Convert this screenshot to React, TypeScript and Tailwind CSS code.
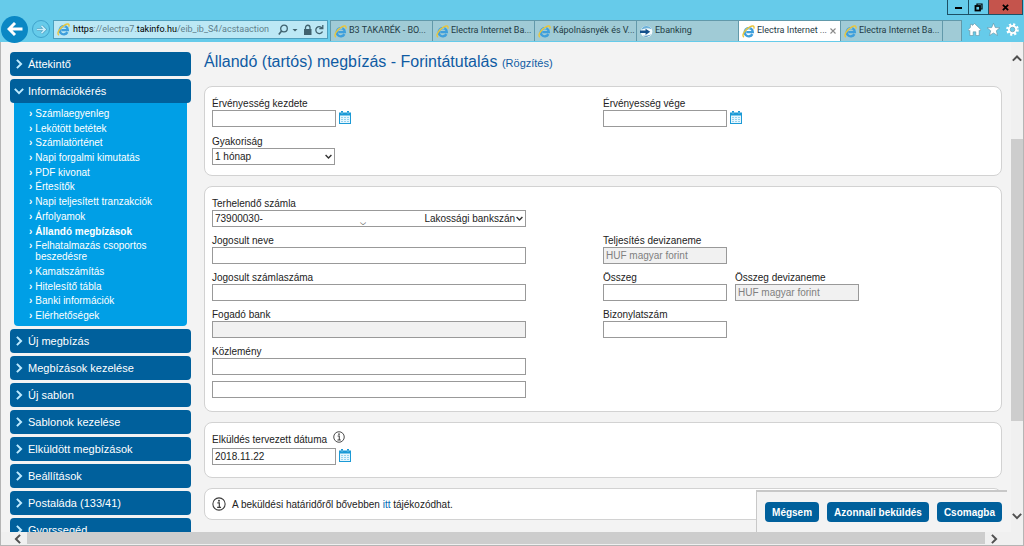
import React, { useState } from "react";

const mainMenuAfter = [
  "Új megbízás",
  "Megbízások kezelése",
  "Új sablon",
  "Sablonok kezelése",
  "Elküldött megbízások",
  "Beállítások",
  "Postaláda (133/41)",
  "Gyorssegéd",
];

const subMenu = [
  "Számlaegyenleg",
  "Lekötött betétek",
  "Számlatörténet",
  "Napi forgalmi kimutatás",
  "PDF kivonat",
  "Értesítők",
  "Napi teljesített tranzakciók",
  "Árfolyamok",
  "Állandó megbízások",
  "Felhatalmazás csoportos beszedésre",
  "Kamatszámítás",
  "Hitelesítő tábla",
  "Banki információk",
  "Elérhetőségek",
];

const tabs = [
  { title: "B3 TAKARÉK - BO...", icon: "ie" },
  { title: "Electra Internet Ba...", icon: "ie" },
  { title: "Kápolnásnyék és V...", icon: "ie" },
  { title: "Ebanking", icon: "bank" },
  { title: "Electra Internet ...", icon: "ie", active: true },
  { title: "Electra Internet Ba...", icon: "ie" },
];

function IeIcon() {
  return (
    <svg viewBox="0 0 14 14" className="size-[13px] shrink-0" fill="none" aria-hidden="true">
      <path d="M11.200 9.800A4.400 4.400 0 1 1 11.700 7.700H4.600" stroke="#3f9fdc" strokeWidth="2.500" />
      <path d="M3.400 6.400A4 4 0 0 1 9 4" stroke="#8fd0f5" strokeWidth="0.900" />
      <path d="M1.600 12.600C-.4 10.400 4 4.400 8 2.200C11 .6 13.400 .5 12.900 3.300" stroke="#e9c63c" strokeWidth="1.500" strokeLinecap="round" />
    </svg>
  );
}

function BankIcon() {
  return (
    <svg viewBox="0 0 14 14" className="size-[13px] shrink-0" aria-hidden="true">
      <circle cx="7" cy="7" r="6.300" fill="#f4fbfd" />
      <path d="M1.300 5.200A6 6 0 0 1 12.500 4.600C9 3 5 3.200 1.300 5.200Z" fill="#6fb2da" />
      <path d="M0 6H6V4L11 7.400L6 10.800V8.600H0Z" fill="#15508c" />
      <path d="M3 11.600C6 13.200 9.500 13 12.300 10C10 11.400 6.500 11.800 3 11.600Z" fill="#2f7fb8" />
    </svg>
  );
}

function Chevron({ dir, className }: { dir: "up" | "down" | "left" | "right"; className: string }) {
  const d = {
    up: "M1 8L6 3L11 8",
    down: "M1 3.500L6 8.500L11 3.500",
    left: "M8.500 1L3.500 6L8.500 11",
    right: "M3.500 1L8.500 6L3.500 11",
  }[dir];
  return (
    <svg viewBox="0 0 12 12" className={className} fill="none" stroke="currentColor" strokeWidth="2.400" aria-hidden="true">
      <path d={d} />
    </svg>
  );
}

function CalendarIcon() {
  return (
    <svg viewBox="0 0 12 13" className="h-[13px] w-3" aria-hidden="true">
      <path d="M2 0H4V1.500H8V0H10V1.500H12V13H0V1.500H2Z" fill="#1c9ad6" />
      <rect x="1" y="4.500" width="10" height="7.500" fill="#e6f6fd" />
      <g fill="#45aede">
        <rect x="2.500" y="6" width="1" height="1" />
        <rect x="5.500" y="6" width="1" height="1" />
        <rect x="8.500" y="6" width="1" height="1" />
        <rect x="2.500" y="8" width="1" height="1" />
        <rect x="5.500" y="8" width="1" height="1" />
        <rect x="8.500" y="8" width="1" height="1" />
        <rect x="2.500" y="10" width="1" height="1" />
        <rect x="5.500" y="10" width="1" height="1" />
        <rect x="8.500" y="10" width="1" height="1" />
      </g>
      <path d="M2.500 2H3.500M8.500 2H9.500" stroke="#fff" strokeWidth="0.800" />
    </svg>
  );
}

function CalendarButton() {
  return (
    <button type="button" aria-label="Naptár" className="pt-px">
      <CalendarIcon />
    </button>
  );
}

function InfoIcon({ className }: { className: string }) {
  return (
    <svg viewBox="0 0 13 13" className={className} fill="none" stroke="#3c3c3c" aria-hidden="true">
      <circle cx="6.500" cy="6.500" r="5.700" strokeWidth="1" />
      <path d="M5 5.500H6.800V9.500M4.800 9.700H8.400" strokeWidth="1.100" />
      <circle cx="6.500" cy="3.400" r="0.900" fill="#3c3c3c" stroke="none" />
    </svg>
  );
}

function TextBox({
  id,
  value = "",
  disabled = false,
  wide = false,
  label,
}: {
  id: string;
  value?: string;
  disabled?: boolean;
  wide?: boolean;
  label?: string;
}) {
  return (
    <input
      id={id}
      type="text"
      defaultValue={value}
      disabled={disabled}
      aria-label={label}
      className={
        (wide ? "w-[314px]" : "w-[124px]") +
        " h-[17px] border border-[#999] px-[2px] leading-3 " +
        (disabled ? "bg-[#f1f1f1] text-[#808080]" : "bg-white text-[#222]")
      }
    />
  );
}

function Field({
  id,
  label,
  value = "",
  disabled = false,
  calendar = false,
  wide = false,
}: {
  id: string;
  label: string;
  value?: string;
  disabled?: boolean;
  calendar?: boolean;
  wide?: boolean;
}) {
  return (
    <div>
      <label htmlFor={id} className="block leading-[13px]">
        {label}
      </label>
      <div className="flex items-start gap-[3px]">
        <TextBox id={id} value={value} disabled={disabled} wide={wide} />
        {calendar && <CalendarButton />}
      </div>
    </div>
  );
}

function Picker({ id, label, option, wide = false }: { id: string; label: string; option: string; wide?: boolean }) {
  return (
    <div>
      <label htmlFor={id} className="block leading-[13px]">
        {label}
      </label>
      <div className={(wide ? "w-[314px]" : "w-[123px]") + " relative"}>
        <select
          id={id}
          className="block h-[17px] w-full appearance-none border border-[#999] bg-white px-[2px] leading-[14px] text-[#222]"
        >
          <option>{option}</option>
        </select>
        <Chevron dir="down" className="pointer-events-none absolute top-[5px] right-[3px] size-[7px] text-[#333]" />
      </div>
    </div>
  );
}

function Card({ className, children }: { className: string; children: React.ReactNode }) {
  return <section className={"rounded-lg border border-[#d2d2d2] bg-white px-[7px] " + className}>{children}</section>;
}

function MenuButton({ label, open = false, onClick }: { label: string; open?: boolean; onClick?: () => void }) {
  return (
    <button
      type="button"
      aria-expanded={open}
      onClick={onClick}
      className="flex h-6 w-full shrink-0 items-center gap-1 rounded-[4px] bg-[#00609c] pl-1 text-left text-[11px] text-white"
    >
      <Chevron dir={open ? "down" : "right"} className="size-[10px] text-[#bdeaff]" />
      {label}
    </button>
  );
}

function BrowserBar() {
  return (
    <header className="shrink-0 bg-[#66cbea] font-[Roboto,'Noto_Sans',sans-serif] text-[9px]">
      <div className="flex h-5 items-start justify-end pr-px">
        <button type="button" aria-label="Kis méret" className="flex h-[15px] w-[22px] items-end justify-center border border-t-0 border-[#1d5065] pb-[5px]">
          <span className="h-[2px] w-[7px] bg-black" />
        </button>
        <button type="button" aria-label="Előző méret" className="flex h-[15px] w-5 items-center justify-center border border-t-0 border-l-0 border-[#1d5065]">
          <svg viewBox="0 0 9 9" className="size-[9px]" fill="none" stroke="#000" aria-hidden="true">
            <path d="M3 2.500V1H8V6H6.500" strokeWidth="1.200" />
            <rect x="1.500" y="3" width="4.500" height="4.500" strokeWidth="1.800" />
          </svg>
        </button>
        <button type="button" aria-label="Bezárás" className="flex h-[15px] w-[34px] items-center justify-center border border-t-0 border-l-0 border-[#1d5065] bg-[#c5544c]">
          <svg viewBox="0 0 8 8" className="size-[7px]" stroke="#000" strokeWidth="2" aria-hidden="true">
            <path d="M1 1L7 7M7 1L1 7" />
          </svg>
        </button>
      </div>
      <div className="flex h-[22px] items-start">
        <div className="flex h-[18px] w-[53px] shrink-0 items-center gap-1 pl-px">
          <button type="button" aria-label="Vissza" className="flex size-[27px] shrink-0 items-center justify-center rounded-full bg-[#0a87c4] text-white">
            <svg viewBox="0 0 16 14" className="h-[14px] w-4" fill="none" stroke="currentColor" strokeWidth="2.900" aria-hidden="true">
              <path d="M15.500 7H2.500M8 1L2 7L8 13" />
            </svg>
          </button>
          <button type="button" aria-label="Előre" className="flex size-[18px] shrink-0 items-center justify-center rounded-full border border-[#3fa3cc]">
            <svg viewBox="0 0 12 12" className="size-[11px]" fill="none" stroke="#4c9fc0" strokeWidth="3.200" aria-hidden="true">
              <path d="M1 6H10M6 2L10 6L6 10" />
              <path d="M1 6H10M6 2L10 6L6 10" stroke="#c9eefa" strokeWidth="1.700" />
            </svg>
          </button>
        </div>
        <div className="flex h-[19px] w-[275px] shrink-0 items-center border border-[#4d9fbd] bg-[#bce8f5] pr-[3px] pl-[3px]">
          <IeIcon />
          <input
            type="text"
            aria-label="Cím"
            className="sr-only"
            defaultValue="https://electra7.takinfo.hu/eib_ib_S4/acstaaction"
          />
          <span className="flex-1 pl-[3px] whitespace-nowrap text-[#5f818d]">
            <span className="text-black">https</span>://electra7.<span className="text-black">takinfo.hu</span>/eib_ib_S4/acstaaction
          </span>
          <svg viewBox="0 0 46 12" className="h-3 w-[46px] shrink-0" fill="none" stroke="#40626f" aria-hidden="true">
            <circle cx="6" cy="4.500" r="3.300" strokeWidth="1.300" />
            <path d="M3.600 7L.800 10.500" strokeWidth="1.600" />
            <path d="M14.500 5H19.500L17 7.500Z" fill="#40626f" stroke="none" />
            <rect x="26" y="5" width="7.500" height="6" fill="#40626f" stroke="none" />
            <path d="M27.500 5.500V3.500A2.200 2.200 0 0 1 32 3.500V5.500" strokeWidth="1.300" />
            <path d="M44 3.800A3.500 3.500 0 1 0 44.500 7.500M44.800 1V4.500H41.300" strokeWidth="1.300" />
          </svg>
        </div>
        <nav className="ml-[2px] flex min-w-0 flex-1" aria-label="Lapok">
          {tabs.map((tab, i) => (
            <div
              key={i}
              className={
                "flex h-[21px] w-[102px] min-w-0 shrink items-center gap-[2px] border-t border-l border-[#6299aa] pl-[3px] text-[#1f3b45] " +
                (tab.active ? "bg-white" : "bg-[#a0cbd6]")
              }
            >
              {tab.icon === "ie" ? <IeIcon /> : <BankIcon />}
              <a href="#" className="whitespace-nowrap">
                {tab.title}
              </a>
              {tab.active && (
                <button type="button" aria-label="Lap bezárása" className="mr-1 ml-auto">
                  <svg viewBox="0 0 6 6" className="size-[6px]" stroke="#8a8a8a" strokeWidth="1.100" aria-hidden="true">
                    <path d="M.500 .500L5.500 5.500M5.500 .500L.500 5.500" />
                  </svg>
                </button>
              )}
            </div>
          ))}
          <button type="button" aria-label="Új lap" className="h-[21px] w-5 border border-b-0 border-[#6299aa] bg-[#a0cbd6]" />
        </nav>
        <div className="flex h-[18px] shrink-0 items-center gap-[6px] pr-[5px] text-white">
          <button type="button" aria-label="Kezdőlap">
            <svg viewBox="0 0 14 14" className="size-[13px]" fill="#fff" stroke="#5b8a9a" strokeWidth="0.600" aria-hidden="true">
              <path d="M7 .500L14 7.300L12.800 8.600L12 7.900V13.500H8.400V9.500H5.600V13.500H2V7.900L1.200 8.600L0 7.300L2.600 4.800V1.500H4.800V2.700Z" />
            </svg>
          </button>
          <button type="button" aria-label="Kedvencek">
            <svg viewBox="0 0 14 14" className="size-[13px]" fill="#fff" stroke="#5b8a9a" strokeWidth="0.600" aria-hidden="true">
              <path d="M7 .300L8.900 4.900L13.800 5.200L10 8.400L11.300 13.400L7 10.700L2.700 13.400L4 8.400L.200 5.200L5.100 4.900Z" />
            </svg>
          </button>
          <button type="button" aria-label="Eszközök">
            <svg viewBox="0 0 14 14" className="size-[13px]" fill="none" aria-hidden="true">
              <circle cx="7" cy="7" r="5.400" stroke="#fff" strokeWidth="2.800" strokeDasharray="2.200 2.040" />
              <circle cx="7" cy="7" r="3.700" stroke="#fff" strokeWidth="2.400" />
              <circle cx="7" cy="7" r="2.500" stroke="#5b8a9a" strokeWidth="0.600" />
            </svg>
          </button>
        </div>
      </div>
    </header>
  );
}

const nb = "\u00a0";
const accountOption = "73900030-" + nb.repeat(35) + "\u203f" + nb.repeat(21) + "Lakossági bankszán";

export default function App() {
  const [open, setOpen] = useState(true);
  return (
    <div className="flex h-screen flex-col overflow-hidden bg-[#f3f3f3] font-['Liberation_Sans',Arial,sans-serif] text-[10px] text-[#222]">
      <BrowserBar />
      <div className="flex min-h-0 flex-1 flex-col border-x border-b border-[#b5b5b5]">
        <div className="flex min-h-0 flex-1">
          <div className="relative flex min-w-0 flex-1 items-start gap-[13px] self-stretch overflow-hidden pt-[10px] pr-[9px] pl-[9px]">
            <nav className="flex w-[181px] shrink-0 flex-col gap-[3px]" aria-label="Főmenü">
              <MenuButton label="Áttekintő" />
              <div>
                <MenuButton label="Információkérés" open={open} onClick={() => setOpen(!open)} />
                {open && (
                  <ul className="mx-1 flex min-h-[223px] flex-col justify-between rounded-b-[4px] bg-[#009fe6] pt-[5px] pr-6 pb-[5px] pl-[15px] leading-[11px] text-white">
                    {subMenu.map((item) => (
                      <li key={item} className="flex gap-[3px]">
                        <span aria-hidden="true" className="font-bold">
                          ›
                        </span>
                        <a href="#" className={item === "Állandó megbízások" ? "font-bold" : ""}>
                          {item}
                        </a>
                      </li>
                    ))}
                  </ul>
                )}
              </div>
              {mainMenuAfter.map((item) => (
                <MenuButton key={item} label={item} />
              ))}
            </nav>

            <main className="flex min-w-0 flex-1 flex-col gap-[10px]">
              <h1 className="h-6 text-[16px] leading-5 text-[#0f5ba3]">
                Állandó (tartós) megbízás - Forintátutalás <small className="text-[11px]">(Rögzítés)</small>
              </h1>

              <Card className="grid grid-cols-[391px_1fr] gap-y-2 pt-[10px] pb-[10px]">
                <Field id="start" label="Érvényesség kezdete" calendar />
                <Field id="end" label="Érvényesség vége" calendar />
                <Picker id="frequency" label="Gyakoriság" option="1 hónap" />
              </Card>

              <Card className="grid grid-cols-[391px_1fr] gap-y-[7px] pt-[10px] pb-[13px]">
                <div className="col-span-2">
                  <Picker id="account" label="Terhelendő számla" option={accountOption} wide />
                </div>
                <Field id="name" label="Jogosult neve" wide />
                <Field id="currency" label="Teljesítés devizaneme" value="HUF magyar forint" disabled />
                <Field id="beneficiary" label="Jogosult számlaszáma" wide />
                <div className="flex gap-2">
                  <Field id="amount" label="Összeg" />
                  <Field id="amountCurrency" label="Összeg devizaneme" value="HUF magyar forint" disabled />
                </div>
                <Field id="bank" label="Fogadó bank" disabled wide />
                <Field id="document" label="Bizonylatszám" />
                <div className="flex flex-col gap-[6px]">
                  <Field id="note1" label="Közlemény" wide />
                  <TextBox id="note2" label="Közlemény második sora" wide />
                </div>
              </Card>

              <Card className="pt-2 pb-3">
                <div className="flex items-start gap-[6px]">
                  <label htmlFor="sendDate" className="pt-[2px] pb-[2px] leading-[13px]">
                    Elküldés tervezett dátuma
                  </label>
                  <InfoIcon className="size-3" />
                </div>
                <div className="flex items-start gap-[3px]">
                  <TextBox id="sendDate" value="2018.11.22" />
                  <CalendarButton />
                </div>
              </Card>

              <Card className="flex h-8 items-center gap-[6px]">
                <InfoIcon className="size-[14px]" />
                <p>
                  A beküldési határidőről bővebben{" "}
                  <a href="#" className="text-[#0069b4]">
                    itt
                  </a>{" "}
                  tájékozódhat.
                </p>
              </Card>
            </main>

            <div className="absolute right-1 bottom-0 flex h-[42px] items-start gap-2 border-t-2 border-l border-[#c8c8c8] bg-[#f3f3f3] pt-[10px] pr-[5px] pl-2 font-bold text-white">
              <button type="button" className="h-5 rounded-[4px] bg-[#00609c] px-[7px]">
                Mégsem
              </button>
              <button type="button" className="h-5 rounded-[4px] bg-[#00609c] px-[7px]">
                Azonnali beküldés
              </button>
              <button type="button" className="h-5 rounded-[4px] bg-[#00609c] px-[7px]">
                Csomagba
              </button>
            </div>
          </div>

          <div className="flex w-3 shrink-0 flex-col items-center bg-[#f0f0f0] text-[#505050]" aria-hidden="true">
            <Chevron dir="up" className="mt-3 size-[10px]" />
            <div className="mt-[75px] w-full flex-1 bg-[#cdcdcd]" />
            <Chevron dir="down" className="mt-[90px] mb-[11px] size-[10px]" />
          </div>
        </div>
        <div className="flex h-[13px] shrink-0 items-center bg-[#f0f0f0] pr-6 pl-3 text-[#505050]" aria-hidden="true">
          <Chevron dir="left" className="size-[10px]" />
          <div className="mr-1 ml-1 h-3 flex-1 self-start bg-[#cdcdcd]" />
          <Chevron dir="right" className="size-[10px]" />
        </div>
      </div>
    </div>
  );
}
